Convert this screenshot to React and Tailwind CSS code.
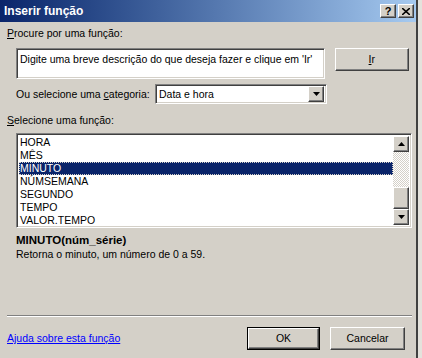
import { useState } from "react";

const items = ["HORA", "MÊS", "MINUTO", "NÚMSEMANA", "SEGUNDO", "TEMPO", "VALOR.TEMPO"];

// classic win9x 3d borders
const raised =
  "border border-t-white border-l-white border-r-[#404040] border-b-[#404040] shadow-[inset_-1px_-1px_0_#808080]";
const sunken =
  "border border-t-[#808080] border-l-[#808080] border-r-white border-b-white shadow-[inset_1px_1px_0_#404040,inset_-1px_-1px_0_#d4d0c8]";

const Arrow = ({ up }) => (
  <svg width="7" height="4" viewBox="0 0 7 4">
    <path d={up ? "M3.5 0 L7 4 L0 4 Z" : "M0 0 L7 0 L3.5 4 Z"} fill="#000" />
  </svg>
);

const App = () => {
  const [selected, setSelected] = useState("MINUTO");

  return (
    <div className="flex w-[422px] h-[358px] bg-[#e4e2dc] font-['Liberation_Sans',Arial,sans-serif] text-[10.5px] text-black leading-[13px] whitespace-nowrap">
      <div className="flex flex-col w-[418px] h-full bg-[#d4d0c8] border-r-2 border-r-[#404040]">
        {/* Title bar */}
        <div className="flex items-center justify-between h-[22px] pl-[4px] pr-[2px] bg-gradient-to-r from-[#0a246a] to-[#a6caf0]">
          <span className="text-white font-bold text-[12px]">Inserir função</span>
          <div className="flex gap-[2px]">
            <div className={`w-[16px] h-[14px] bg-[#d4d0c8] flex items-center justify-center font-bold text-[11px] leading-none ${raised}`}>?</div>
            <div className={`w-[16px] h-[14px] bg-[#d4d0c8] flex items-center justify-center ${raised}`}>
              <svg width="8" height="7" viewBox="0 0 8 7">
                <path d="M0 0 L8 7 M8 0 L0 7" stroke="#000" strokeWidth="1.6" />
              </svg>
            </div>
          </div>
        </div>

        <div className="flex flex-col px-[7px] flex-1">
          <div className="mt-[5px]">
            <u>P</u>rocure por uma função:
          </div>

          <div className="flex mt-[8px] pl-[9px]">
            <div className={`w-[311px] h-[31px] bg-white px-[3px] py-[4px] ${sunken}`}>
              Digite uma breve descrição do que deseja fazer e clique em 'Ir'
            </div>
            <button className={`ml-[10px] w-[75px] h-[23px] bg-[#d4d0c8] flex items-center justify-center ${raised}`}>
              <u>I</u>r
            </button>
          </div>

          <div className="flex items-center mt-[5px] pl-[9px]">
            <span className="w-[139px]">
              Ou selecione uma <u>c</u>ategoria:
            </span>
            <div className={`w-[172px] h-[20px] bg-white flex items-center justify-between pl-[3px] pr-[2px] ${sunken}`}>
              <span>Data e hora</span>
              <div className={`w-[16px] h-[16px] bg-[#d4d0c8] flex items-center justify-center ${raised}`}>
                <Arrow />
              </div>
            </div>
          </div>

          <div className="mt-[10px]">
            <u>S</u>elecione uma função:
          </div>

          <div className={`flex mt-[6px] ml-[9px] w-[396px] h-[95px] bg-white p-[2px] ${sunken}`}>
            <div className="flex-1 flex flex-col">
              {items.map((it) => (
                <div
                  key={it}
                  onClick={() => setSelected(it)}
                  className={`h-[13px] pl-[1px] ${
                    selected === it
                      ? "bg-[#0a246a] text-white outline-1 outline-dotted outline-[#d4d0c8] -outline-offset-1"
                      : ""
                  }`}
                >
                  {it}
                </div>
              ))}
            </div>
            <div className="flex flex-col w-[16px] bg-[repeating-conic-gradient(#d4d0c8_0_25%,#ffffff_0_50%)] bg-[length:2px_2px]">
              <div className={`h-[16px] bg-[#d4d0c8] flex items-center justify-center ${raised}`}>
                <Arrow up />
              </div>
              <div className="flex-1" />
              <div className={`h-[22px] bg-[#d4d0c8] ${raised}`} />
              <div className={`h-[16px] bg-[#d4d0c8] flex items-center justify-center ${raised}`}>
                <Arrow />
              </div>
            </div>
          </div>

          <div className="mt-[6px] ml-[9px] font-bold text-[11.5px]">MINUTO(núm_série)</div>
          <div className="ml-[9px] mt-[1px]">Retorna o minuto, um número de 0 a 59.</div>

          <div className="mt-auto h-[2px] w-[405px] border-t border-t-[#808080] border-b border-b-white" />

          <div className="flex items-center justify-between h-[23px] mt-[10px] mb-[8px]">
            <a href="#" className="text-[#0000ff] underline">
              Ajuda sobre esta função
            </a>
            <div className="flex gap-[10px] mr-[4px]">
              <button className="w-[73px] h-[23px] border border-black bg-[#d4d0c8]">
                <div className={`w-full h-full flex items-center justify-center ${raised}`}>OK</div>
              </button>
              <button className={`w-[75px] h-[23px] bg-[#d4d0c8] flex items-center justify-center ${raised}`}>
                Cancelar
              </button>
            </div>
          </div>
        </div>
      </div>
    </div>
  );
};

export default App;
